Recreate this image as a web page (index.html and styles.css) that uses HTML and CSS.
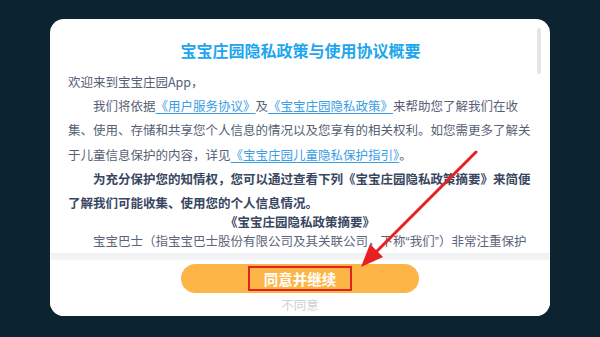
FILE: index.html
```html
<!DOCTYPE html>
<html lang="zh-CN">
<head>
<meta charset="utf-8">
<title>宝宝庄园隐私政策与使用协议概要</title>
<link rel="stylesheet" href="styles.css">
</head>
<body>
<div class="screen">
  <div class="card">
    <div class="content">
      <h1 class="title">宝宝庄园隐私政策与使用协议概要</h1>
      <p class="greet">欢迎来到宝宝庄园App，</p>
      <p class="para">我们将依据<a class="link">《用户服务协议》</a>及<a class="link">《宝宝庄园隐私政策》</a>来帮助您了解我们在收集、使用、存储和共享您个人信息的情况以及您享有的相关权利。如您需更多了解关于儿童信息保护的内容，详见<a class="link">《宝宝庄园儿童隐私保护指引》</a>。</p>
      <p class="para strong">为充分保护您的知情权，您可以通过查看下列《宝宝庄园隐私政策摘要》来简便了解我们可能收集、使用您的个人信息情况。</p>
      <p class="summary-title">《宝宝庄园隐私政策摘要》</p>
      <p class="para summary">宝宝巴士（指宝宝巴士股份有限公司及其关联公司，下称<span class="quote">“</span>我们<span class="quote">”</span>）非常注重保护您的个人信息及隐私，我们希望通过本摘要向您简洁介绍我们如何收集和使用您的个人信息。</p>
      <div class="scrollbar"></div>
    </div>
    <div class="actions">
      <button class="agree"><span class="mark">同意并继续</span></button>
      <span class="decline">不同意</span>
    </div>
  </div>
  <svg class="arrow" width="600" height="337" viewBox="0 0 600 337">
    <line x1="476" y1="152" x2="372" y2="256" stroke="#e8201f" stroke-width="3" stroke-linecap="round"/>
    <polygon points="361,267 370,244 383,257" fill="#e8201f"/>
  </svg>
</div>
</body>
</html>
```

FILE: styles.css
```css
html, body {
  margin: 0;
  padding: 0;
}
body {
  background: #0c2330;
  font-family: "Noto Sans CJK SC", "Noto Sans", sans-serif;
}
.screen {
  position: relative;
  width: 600px;
  height: 337px;
  padding-top: 19px;
  box-sizing: border-box;
  overflow: hidden;
}
.card {
  width: 500px;
  height: 297px;
  margin: 0 auto;
  background: #ffffff;
  border-radius: 14px;
  display: flex;
  flex-direction: column;
  overflow: hidden;
}
.content {
  position: relative;
  height: 234px;
  box-sizing: border-box;
  padding: 19px 14px 0 18px;
  overflow: hidden;
  flex: none;
}
.title {
  margin: 0;
  font-size: 16px;
  font-weight: bold;
  line-height: 24px;
  color: #20a6ee;
  text-align: center;
  padding-right: 3px;
}
.greet, .para, .summary-title {
  margin: 0;
  font-size: 12.5px;
  line-height: 24.2px;
  color: #566075;
}
.greet {
  margin-top: 8px;
}
.para {
  text-indent: 2em;
}
.strong {
  font-weight: bold;
  color: #384661;
}
.link {
  color: #3b9de3;
  text-decoration: underline;
  text-underline-offset: 2px;
}
.summary-title {
  margin-top: -2px;
  font-weight: bold;
  color: #384661;
  text-align: center;
  line-height: 18px;
  padding-right: 4px;
}
.summary {
  line-height: 20px;
  color: #5b6479;
}
.quote {
  font-family: "Liberation Sans", sans-serif;
}
.scrollbar {
  position: absolute;
  right: 9px;
  top: 9px;
  width: 4px;
  height: 46px;
  border-radius: 2px;
  background: #e4e5e7;
}
.actions {
  flex: 1;
  display: flex;
  flex-direction: column;
  align-items: center;
  padding-top: 11px;
  background: linear-gradient(to bottom, #eff0f3 0, #f5f6f8 7px, #ffffff 7px);
}
.agree {
  width: 238px;
  height: 29px;
  border: none;
  border-radius: 15px;
  background: #fdb548;
  padding: 0;
  display: flex;
  align-items: center;
  justify-content: center;
  font-family: inherit;
}
.mark {
  display: inline-block;
  border: 2px solid #e0231f;
  padding: 0 14px;
  line-height: 21px;
  font-size: 14.5px;
  font-weight: bold;
  color: #ffffff;
}
.decline {
  margin-top: 4px;
  font-size: 12.5px;
  line-height: 16px;
  color: #cfd0d2;
}
.arrow {
  position: absolute;
  left: 0;
  top: 0;
  pointer-events: none;
}
```
